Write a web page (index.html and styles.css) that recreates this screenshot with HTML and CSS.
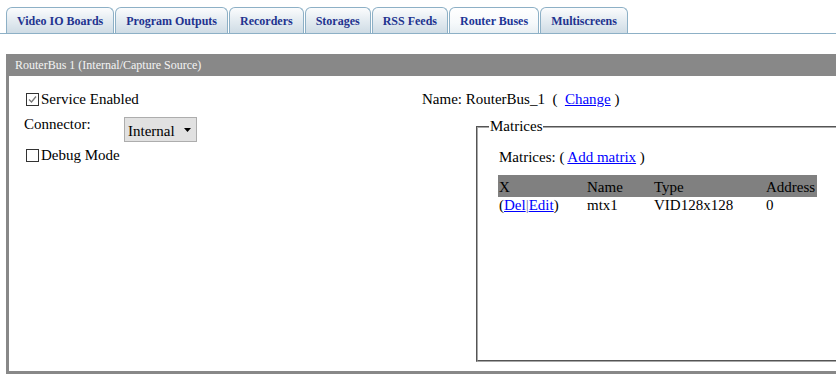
FILE: index.html
```html
<!DOCTYPE html>
<html>
<head>
<meta charset="utf-8">
<link rel="stylesheet" href="styles.css">
</head>
<body>
<div class="tabs">
  <a class="tab">Video IO Boards</a>
  <a class="tab">Program Outputs</a>
  <a class="tab">Recorders</a>
  <a class="tab">Storages</a>
  <a class="tab">RSS Feeds</a>
  <a class="tab active">Router Buses</a>
  <a class="tab">Multiscreens</a>
</div>
<div class="panel">
  <div class="panel-head">RouterBus 1 (Internal/Capture Source)</div>
  <div class="panel-body">
    <div class="left">
      <div class="chk-row"><span class="cb"><svg width="11" height="11" viewBox="0 0 11 11"><path d="M2 5.5 L4.5 8 L9 2.5" fill="none" stroke="#777" stroke-width="1.3"/></svg></span>Service Enabled</div>
      <div class="conn-row">
        <span class="conn-label">Connector:</span>
        <span class="select">Internal<svg class="arrow" width="8" height="4" viewBox="0 0 8 4"><path d="M0 0 H7 L3.5 4 Z" fill="#000"/></svg></span>
      </div>
      <div class="chk-row debug"><span class="cb"></span>Debug Mode</div>
    </div>
    <div class="right">
      <div class="name-row">Name: RouterBus_1 &nbsp;(&nbsp; <a class="link">Change</a> )</div>
      <fieldset class="matrices">
        <legend>Matrices</legend>
        <div class="mat-line">Matrices: ( <a class="link">Add matrix</a> )</div>
        <table class="mtable">
          <thead>
            <tr><th class="c1">X</th><th class="c2">Name</th><th class="c3">Type</th><th class="c4">Address</th></tr>
          </thead>
          <tbody>
            <tr><td>(<a class="link">Del</a><span class="sep">|</span><a class="link">Edit</a>)</td><td>mtx1</td><td>VID128x128</td><td>0</td></tr>
          </tbody>
        </table>
      </fieldset>
    </div>
  </div>
</div>
</body>
</html>
```
FILE: styles.css
```css
html, body {
  margin: 0;
  padding: 0;
  overflow: hidden;
  background: #fff;
}
body {
  width: 836px;
  height: 379px;
  font-family: "Liberation Serif", "Times New Roman", serif;
  font-size: 15px;
  color: #000;
}
.tabs {
  display: flex;
  align-items: flex-end;
  gap: 1px;
  padding: 7px 0 0 6px;
  border-bottom: 1px solid #8db0c6;
  height: 26px;
}
.tab {
  box-sizing: border-box;
  height: 26px;
  padding: 6px 10px 0 10px;
  border: 1px solid #8db0c6;
  border-bottom: none;
  border-radius: 6px 6px 0 0;
  background: linear-gradient(#fbfcfd 0%, #e6edf2 45%, #cfdce5 100%);
  font-weight: bold;
  font-size: 12px;
  color: #22338f;
  white-space: nowrap;
  line-height: 14px;
}
.tab.active {
  background: linear-gradient(#ffffff 0%, #f6f9fb 60%, #e8eff3 100%);
  color: #1d3596;
}
.panel {
  margin: 20px 0 0 6px;
  width: 900px;
  border-left: 3px solid #888;
  border-bottom: 3px solid #888;
}
.panel-head {
  margin-left: -3px;
  height: 22px;
  background: #888;
  color: #f4f4f4;
  font-size: 12px;
  line-height: 23px;
  padding-left: 9px;
}
.panel-body {
  display: flex;
  height: 295px;
  padding-left: 15px;
}
.left {
  width: 398px;
  padding-top: 16px;
}
.chk-row {
  display: flex;
  align-items: center;
  height: 15px;
  line-height: 15px;
  padding-left: 2px;
}
.cb {
  box-sizing: border-box;
  width: 13px;
  height: 13px;
  border: 1px solid #333;
  margin-right: 2px;
  display: flex;
  align-items: center;
  justify-content: center;
  background: #fff;
}
.conn-row {
  display: flex;
  align-items: flex-start;
  margin-top: 10px;
  height: 26px;
}
.conn-label {
  width: 100px;
  line-height: 15px;
  padding-top: 0;
}
.select {
  box-sizing: border-box;
  width: 73px;
  height: 25px;
  background: #e1e1e1;
  border: 1px solid #adadad;
  display: flex;
  align-items: center;
  padding: 3px 0 0 3px;
  line-height: 15px;
}
.arrow {
  margin-left: 9px;
  margin-top: -3px;
}
.debug {
  margin-top: 5px;
}
.right {
  flex: 1;
  padding-top: 16px;
}
.name-row {
  height: 15px;
  line-height: 15px;
}
.link {
  color: #0000ff;
  text-decoration: underline;
}
.matrices {
  box-sizing: border-box;
  margin: 12px 0 0 54px;
  width: 420px;
  height: 243px;
  border: 2px groove #a8a8a8;
  padding: 0 0 0 21px;
}
.matrices legend {
  margin-left: -10px;
  padding: 0 1px;
  line-height: 15px;
}
.mat-line {
  margin-top: 16px;
  line-height: 15px;
  height: 15px;
}
.mtable {
  margin-top: 10px;
  margin-left: -1px;
  border-collapse: collapse;
  width: 319px;
}
.mtable th {
  background: #808080;
  font-weight: normal;
  text-align: left;
  height: 20px;
  padding: 2px 0 0 1px;
  line-height: 15px;
  vertical-align: middle;
}
.mtable td {
  padding: 1px 0 0 1px;
  line-height: 15px;
  vertical-align: middle;
}
.c1 { width: 87px; }
.c2 { width: 66px; }
.c3 { width: 111px; }
.c4 { width: 51px; }
.sep {
  color: #6a6aa8;
}
```
